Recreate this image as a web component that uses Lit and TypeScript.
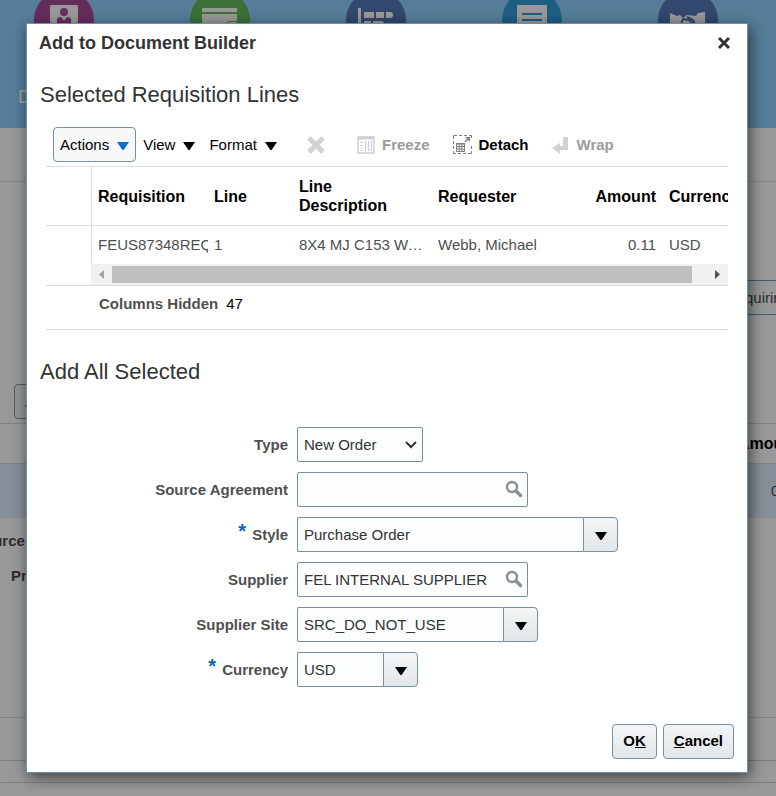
import { LitElement, html, css, svg, nothing } from "lit";
import { customElement } from "lit/decorators.js";

const caret = html`<svg class="caret" width="12" height="8" viewBox="0 0 12 8" aria-hidden="true">
  <path d="M0 0H12L6.600 8H5.400Z" fill="currentColor" />
</svg>`;

const dropCaret = html`<svg class="caret" width="12" height="8" viewBox="0 0 12 8" aria-hidden="true">
  <path d="M0 0H12L6.600 8H5.400Z" fill="#000" />
</svg>`;

const magnifier = html`<svg width="18" height="18" viewBox="0 0 18 18" fill="none" stroke="#8c8f91" aria-hidden="true">
  <circle cx="7" cy="7" r="5" stroke-width="2.4" />
  <path d="M11 11L15.5 15.5" stroke-width="3.4" stroke-linecap="round" />
</svg>`;

@customElement("backdrop-page")
class BackdropPage extends LitElement {
  static styles = css`
    :host {
      display: block;
      overflow: hidden;
      background: #999;
      color: #2d2d2d;
      font: 15px/18px "Liberation Sans", Arial, sans-serif;
    }
    .band {
      height: 128px;
      overflow: hidden;
      background: #567e9a;
    }
    .icons {
      display: flex;
      gap: 96px;
      margin: -10px 0 0 34px;
    }
    .icons svg {
      flex: none;
    }
    .caption {
      margin: 38px 0 0 18px;
      font-size: 18px;
      color: #a3a0a0;
    }
    .crumbs {
      height: 53px;
      border-bottom: 1px solid #868788;
    }
    .filters {
      display: flex;
      justify-content: flex-end;
      padding-top: 98px;
    }
    .choice {
      width: 56px;
      height: 35px;
      box-sizing: border-box;
      padding: 8px 0 0 24px;
      border: 1px solid #4b5b67;
      border-right: 0;
      background: #969798;
      white-space: nowrap;
    }
    .bar {
      padding: 69px 0 4px 14px;
      border-bottom: 1px solid #808488;
    }
    .action {
      width: 83px;
      height: 35px;
      padding: 0 10px;
      border: 1px solid #4b5b67;
      border-radius: 4px;
      background: #949596;
      font: inherit;
      text-align: left;
    }
    .head,
    .row {
      display: flex;
      justify-content: flex-end;
      align-items: center;
      white-space: nowrap;
    }
    .head {
      height: 39px;
      border-bottom: 1px solid #808488;
      color: #000;
      font-weight: bold;
      font-size: 16px;
    }
    .head span {
      width: 38px;
    }
    .row {
      height: 54px;
      background: #868e97;
    }
    .row span {
      width: 5px;
    }
    .details {
      display: grid;
      grid-template-columns: 40px;
      row-gap: 17px;
      height: 185px;
      padding-top: 14px;
      align-content: start;
      font-weight: bold;
      border-bottom: 1px solid #838588;
    }
    .details span {
      margin-left: -26px;
    }
    .details .second {
      margin-left: 11px;
    }
    .strip {
      height: 42px;
      border-bottom: 1px solid #7b8084;
    }
    .thin {
      height: 21px;
    }
  `;

  private badge(color: string, glyph: unknown) {
    return html`<svg width="60" height="60" viewBox="0 0 60 60" aria-hidden="true">
      <circle cx="30" cy="30" r="30" fill=${color} />
      ${glyph}
    </svg>`;
  }

  render() {
    return html`
      <header class="band">
        <div class="icons">
          ${this.badge("#662d5c", svg`
            <rect x="16" y="15" width="28" height="30" rx="1" fill="#999" />
            <circle cx="30" cy="22" r="4" fill="#662d5c" />
            <path d="M23 40V30Q23 27 27 27L30 31L33 27Q37 27 37 30V40Z" fill="#662d5c" />`)}
          ${this.badge("#3b7137", svg`
            <rect x="12" y="18" width="35" height="4" fill="#999" />
            <path d="M12 24H47V31H39L34 34H12Z" fill="#999" />
            <path d="M36 34L39 32H47V35H36Z" fill="#999" />`)}
          ${this.badge("#32486f", svg`
            <path d="M12 18H15V40H12ZM18 22H28V28H18ZM30 22H38V28H30ZM40 22H44Q47 22 47 25Q47 28 44 28H40ZM18 31H25V36H18ZM27 31H35Q38 31 38 34V36H27Z" fill="#999" />`)}
          ${this.badge("#1d5f83", svg`
            <rect x="15" y="15" width="30" height="32" rx="1" fill="#999" />
            <path d="M20 23H40V25H20ZM20 29H40V31H20Z" fill="#1d5f83" />`)}
          ${this.badge("#32486f", svg`
            <path d="M12 23L19 26L22 25L25 28L29 25L38 26L40 23L47 22V42H12Z" fill="#999" />
            <path d="M23 34L25 29L31 30L38 36L35 30L29 27" fill="none" stroke="#32486f" stroke-width="2" />`)}
        </div>
        <div class="caption">D</div>
      </header>
      <div class="crumbs"></div>
      <div class="filters"><div class="choice">quiring</div></div>
      <div class="bar"><button class="action" tabindex="-1">Actions</button></div>
      <div class="head"><span>Amount</span></div>
      <div class="row"><span>0</span></div>
      <div class="details">
        <span>Source</span>
        <span class="second">Pr</span>
      </div>
      <div class="strip"></div>
      <div class="strip thin"></div>
    `;
  }
}

interface Field {
  id: string;
  label: string;
  value: string;
  kind: "select" | "search" | "combo";
  size: string;
  required?: boolean;
}

const fields: Field[] = [
  { id: "type", label: "Type", value: "New Order", kind: "select", size: "w-select" },
  { id: "agreement", label: "Source Agreement", value: "", kind: "search", size: "w-search" },
  { id: "style", label: "Style", value: "Purchase Order", kind: "combo", size: "w-style", required: true },
  { id: "supplier", label: "Supplier", value: "FEL INTERNAL SUPPLIER", kind: "search", size: "w-search" },
  { id: "site", label: "Supplier Site", value: "SRC_DO_NOT_USE", kind: "combo", size: "w-site" },
  { id: "currency", label: "Currency", value: "USD", kind: "combo", size: "w-currency", required: true },
];

@customElement("document-dialog")
class DocumentDialog extends LitElement {
  static styles = css`
    :host {
      display: block;
      font: 15px/18px "Liberation Sans", Arial, sans-serif;
      color: #333;
    }
    .dialog {
      border: 1px solid #6f8fa8;
      background: #fff;
      box-shadow: 2px 4px 14px rgba(0, 0, 0, 0.6);
    }
    button,
    input,
    select {
      font: inherit;
      margin: 0;
      box-sizing: border-box;
    }
    .titlebar {
      display: flex;
      align-items: center;
      justify-content: space-between;
      height: 38px;
      padding: 0 16px 0 12px;
    }
    h1 {
      margin: 0;
      font-size: 18px;
      line-height: 22px;
    }
    .close {
      display: flex;
      padding: 0;
      border: 0;
      background: none;
    }
    h2 {
      margin: 20px 13px 19px;
      font-size: 22px;
      line-height: 26px;
      font-weight: normal;
    }
    .toolbar {
      display: flex;
      align-items: center;
      margin: 0 0 4px 26px;
    }
    .caret {
      margin-top: 2px;
    }
    .menu {
      display: flex;
      align-items: center;
      gap: 8px;
      height: 35px;
      padding: 0 6px;
      border: 1px solid transparent;
      border-radius: 4px;
      background: none;
      color: #000;
    }
    .menu.active {
      border-color: #7490a5;
      background: #f6f8fa;
    }
    .menu.active .caret {
      color: #0572ce;
    }
    .tool {
      display: flex;
      align-items: center;
      gap: 7px;
      margin-left: 23px;
      padding: 0;
      border: 0;
      background: none;
      color: #000;
      font-weight: bold;
    }
    .tool:disabled {
      color: #9b9b9b;
    }
    .freeze {
      margin-left: 32px;
    }
    .grid {
      margin: 0 19px;
      border: solid #d6dfe6;
      border-width: 1px 0;
      overflow: hidden;
    }
    table {
      width: 100%;
      table-layout: fixed;
      border-collapse: separate;
      border-spacing: 0;
    }
    .c-handle { width: 46px; }
    .c-req { width: 116px; }
    .c-line { width: 85px; }
    .c-text { width: 139px; }
    .c-amount { width: 92px; }
    th,
    td {
      box-sizing: border-box;
      padding: 0 7px 0 6px;
      overflow: hidden;
      white-space: nowrap;
      text-align: left;
    }
    th {
      height: 59px;
      border-bottom: 1px solid #d6dfe6;
      color: #000;
      font-size: 16px;
      line-height: 19px;
    }
    td {
      height: 38px;
      color: #4f4f4f;
    }
    .handle {
      border-right: 1px solid #d6dfe6;
    }
    .cut {
      padding-right: 0;
    }
    .ellipsis {
      text-overflow: ellipsis;
    }
    .num {
      text-align: right;
    }
    .scroll {
      display: flex;
      align-items: center;
      height: 21px;
      margin-left: 45px;
      background: #f1f1f1;
    }
    .scroll svg {
      flex: none;
    }
    .thumb {
      flex: 580;
      height: 17px;
      background: #bfbfbf;
    }
    .rest {
      flex: 15;
    }
    .hidden-count {
      display: flex;
      gap: 8px;
      height: 44px;
      box-sizing: border-box;
      margin: 0 19px 29px;
      padding: 9px 0 0 53px;
      border-bottom: 1px solid #d6dfe6;
      color: #000;
    }
    .hidden-count b {
      color: #4f4f4f;
    }
    .form {
      display: grid;
      grid-template-columns: 261px 1fr;
      gap: 10px 9px;
      margin-top: 42px;
    }
    label {
      display: flex;
      justify-content: flex-end;
      align-items: center;
      gap: 6px;
      color: #4f4f4f;
      font-weight: bold;
    }
    .star {
      padding-bottom: 8px;
      color: #0a66b0;
      font-size: 20px;
      line-height: 18px;
    }
    .field {
      position: relative;
      display: flex;
      height: 35px;
    }
    .w-select { width: 126px; }
    .w-search { width: 231px; }
    .w-style { width: 321px; }
    .w-site { width: 241px; }
    .w-currency { width: 121px; }
    input,
    select {
      flex: 1;
      min-width: 0;
      padding: 0 6px;
      border: 1px solid #7490a0;
      border-radius: 2px;
      background: #fcfdfe;
      color: #333;
      appearance: none;
      outline: none;
    }
    .chevron {
      position: absolute;
      right: 6px;
      top: 14px;
      pointer-events: none;
    }
    .lens {
      position: absolute;
      right: 5px;
      top: 8px;
      display: flex;
      padding: 0;
      border: 0;
      background: none;
    }
    .combo input {
      border-right: 0;
      border-radius: 2px 0 0 2px;
    }
    .drop {
      display: flex;
      align-items: center;
      justify-content: center;
      width: 35px;
      padding: 0;
      border: 1px solid #7490a5;
      border-radius: 0 4px 4px 0;
      background: linear-gradient(#f3f5f6, #e2e6e9);
    }
    .footer {
      display: flex;
      justify-content: flex-end;
      gap: 6px;
      padding: 37px 13px 13px;
    }
    .push {
      height: 35px;
      padding: 0 10px 2px;
      border: 1px solid #7490a5;
      border-radius: 4px;
      background: linear-gradient(#f3f5f6, #e2e6e9);
      color: #000;
      font-weight: bold;
    }
  `;

  private control(f: Field) {
    if (f.kind === "select") {
      return html`<div class="field ${f.size}">
        <select id=${f.id}><option>${f.value}</option></select>
        <svg class="chevron" width="12" height="8" viewBox="0 0 12 8" fill="none" stroke="#333" stroke-width="2" aria-hidden="true">
          <path d="M1 1L6 6L11 1" />
        </svg>
      </div>`;
    }
    if (f.kind === "search") {
      return html`<div class="field ${f.size}">
        <input id=${f.id} type="text" .value=${f.value} />
        <button class="lens" aria-label="Search ${f.label}">${magnifier}</button>
      </div>`;
    }
    return html`<div class="field combo ${f.size}">
      <input id=${f.id} type="text" .value=${f.value} />
      <button class="drop" aria-label="Open ${f.label}">${dropCaret}</button>
    </div>`;
  }

  render() {
    return html`
      <section class="dialog" role="dialog" aria-labelledby="title">
        <header class="titlebar">
          <h1 id="title">Add to Document Builder</h1>
          <button class="close" aria-label="Close">
            <svg width="14" height="14" viewBox="0 0 14 14" stroke="#333" stroke-width="3" aria-hidden="true">
              <path d="M2 2L12 12M12 2L2 12" />
            </svg>
          </button>
        </header>

        <h2>Selected Requisition Lines</h2>
        <div class="toolbar">
          <button class="menu active">Actions ${caret}</button>
          <button class="menu">View ${caret}</button>
          <button class="menu">Format ${caret}</button>
          <button class="tool" disabled aria-label="Delete">
            <svg width="18" height="18" viewBox="0 0 18 18" stroke="#d0d2d4" stroke-width="5" aria-hidden="true">
              <path d="M2 2L16 16M16 2L2 16" />
            </svg>
          </button>
          <button class="tool freeze" disabled>
            <svg width="18" height="18" viewBox="0 0 18 18" fill="none" stroke="#cfd1d3" aria-hidden="true">
              <path d="M1 1V17H17V1Z" stroke-width="1.6" />
              <path d="M1 2H17" stroke-width="3" />
              <path d="M8.5 5V15M11.5 5V15M14.5 5V15" stroke-width="1.4" />
              <path d="M3 6.5H6M3 9.5H5M4 12.5H6M3 14.5H5" stroke-width="1.2" />
            </svg>
            Freeze
          </button>
          <button class="tool">
            <svg width="19" height="19" viewBox="0 0 19 19" fill="none" stroke="#7d8083" aria-hidden="true">
              <path d="M0.5 4V0.5H4M6 0.5H9M11 0.5H14M16 0.5H18.5V3M0.5 6V9M0.5 11V14M0.5 16V18.5H3M5 18.5H8M10 18.5H13M15 18.5H18.5V16M18.5 11V14" />
              <path d="M12 7L16 3M12.5 2.7H16.3V6.5" stroke-width="1.4" />
              <path d="M3.5 8.5H11.5V16.5H3.5ZM3 9H12M3.5 11.5H11.5M3.5 14H11.5M6.2 9V16M8.8 9V16" />
            </svg>
            Detach
          </button>
          <button class="tool" disabled>
            <svg width="18" height="18" viewBox="0 0 18 18" fill="#cfd1d3" aria-hidden="true">
              <path d="M11 1H16V14H8V18L0 12L8 7V10H11Z" />
            </svg>
            Wrap
          </button>
        </div>

        <div class="grid">
          <table>
            <colgroup>
              <col class="c-handle" /><col class="c-req" /><col class="c-line" />
              <col class="c-text" /><col class="c-text" /><col class="c-amount" /><col />
            </colgroup>
            <thead>
              <tr>
                <th class="handle"></th>
                <th>Requisition</th>
                <th>Line</th>
                <th>Line<br />Description</th>
                <th>Requester</th>
                <th class="num">Amount</th>
                <th class="cut">Currency</th>
              </tr>
            </thead>
            <tbody>
              <tr>
                <td class="handle"></td>
                <td class="cut">FEUS87348REQ</td>
                <td>1</td>
                <td class="ellipsis">8X4 MJ C153 WATER</td>
                <td>Webb, Michael</td>
                <td class="num">0.11</td>
                <td>USD</td>
              </tr>
            </tbody>
          </table>
          <div class="scroll">
            <svg width="21" height="21" viewBox="0 0 21 21" aria-hidden="true"><path d="M13 6V15L8 10.500Z" fill="#a3a3a3" /></svg>
            <div class="thumb"></div>
            <div class="rest"></div>
            <svg width="21" height="21" viewBox="0 0 21 21" aria-hidden="true"><path d="M8 6V15L13 10.500Z" fill="#505050" /></svg>
          </div>
        </div>
        <div class="hidden-count"><b>Columns Hidden</b><span>47</span></div>

        <h2>Add All Selected</h2>
        <div class="form">
          ${fields.map(
            (f) => html`
              <label for=${f.id}>${f.required ? html`<span class="star">*</span>` : nothing}<span>${f.label}</span></label>
              ${this.control(f)}
            `
          )}
        </div>

        <footer class="footer">
          <button class="push">O<u>K</u></button>
          <button class="push"><u>C</u>ancel</button>
        </footer>
      </section>
    `;
  }
}

@customElement("app-root")
class AppRoot extends LitElement {
  static styles = css`
    :host {
      display: grid;
      min-height: 100vh;
      overflow: hidden;
    }
    .page,
    .modal {
      grid-area: 1 / 1;
      min-width: 0;
    }
    .modal {
      margin: 23px 28px 23px 26px;
      z-index: 1;
    }
  `;

  render() {
    return html`
      <backdrop-page class="page"></backdrop-page>
      <document-dialog class="modal"></document-dialog>
    `;
  }
}
